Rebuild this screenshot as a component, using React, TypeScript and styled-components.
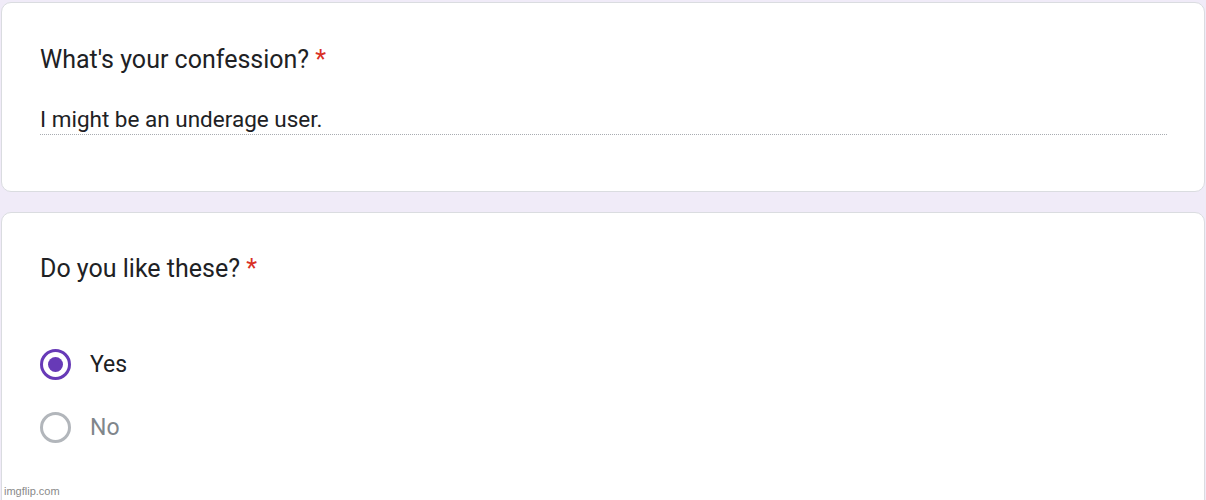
import styled, { createGlobalStyle } from 'styled-components';

const GlobalStyle = createGlobalStyle`
  html, body {
    margin: 0;
    padding: 0;
    background: #f0ebf8;
    font-family: Roboto, 'Liberation Sans', Arial, sans-serif;
    overflow: hidden;
  }
`;

const options = [
  { label: 'Yes', checked: true },
  { label: 'No', checked: false },
];

export default function App() {
  return (
    <>
      <GlobalStyle />
      <Page>
        <Card $pad="42px 38px 56px">
          <Question>
            What's your confession? <Required>*</Required>
          </Question>
          <Answer>I might be an underage user.</Answer>
        </Card>
        <Card $pad="41px 38px 80px">
          <Question>
            Do you like these? <Required>*</Required>
          </Question>
          <OptionList>
            {options.map((opt) => (
              <Option key={opt.label}>
                <Radio $checked={opt.checked} />
                <OptionLabel $checked={opt.checked}>{opt.label}</OptionLabel>
              </Option>
            ))}
          </OptionList>
        </Card>
        <Watermark>imgflip.com</Watermark>
      </Page>
    </>
  );
}

const Page = styled.div`
  position: relative;
  width: 1206px;
  height: 500px;
  padding: 2px 1px 0 1px;
  box-sizing: border-box;
  display: flex;
  flex-direction: column;
  gap: 20px;
  overflow: hidden;
`;

const Card = styled.div<{ $pad: string }>`
  background: #fff;
  border: 1px solid #dadce0;
  border-radius: 10px;
  padding: ${({ $pad }) => $pad};
  display: flex;
  flex-direction: column;
  flex-shrink: 0;
`;

const Question = styled.div`
  color: #202124;
  font-size: 25px;
  line-height: 30px;
`;

const Required = styled.span`
  color: #d93025;
`;

const Answer = styled.div`
  margin-top: 31px;
  width: 1128px;
  color: #202124;
  font-size: 22.5px;
  line-height: 26px;
  padding-bottom: 3px;
  background-image: linear-gradient(to right, #a8acb1 50%, transparent 50%);
  background-size: 2px 1px;
  background-repeat: repeat-x;
  background-position: bottom left;
`;

const OptionList = styled.div`
  margin-top: 65px;
  display: flex;
  flex-direction: column;
  gap: 32px;
`;

const Option = styled.div`
  display: flex;
  align-items: center;
  gap: 19px;
`;

const Radio = styled.span<{ $checked: boolean }>`
  width: 31px;
  height: 31px;
  box-sizing: border-box;
  border-radius: 50%;
  border: 3px solid ${({ $checked }) => ($checked ? '#673ab7' : '#b2b6bb')};
  display: flex;
  align-items: center;
  justify-content: center;

  &::after {
    content: '';
    display: ${({ $checked }) => ($checked ? 'block' : 'none')};
    width: 15px;
    height: 15px;
    border-radius: 50%;
    background: #673ab7;
  }
`;

const OptionLabel = styled.span<{ $checked: boolean }>`
  color: ${({ $checked }) => ($checked ? '#202124' : '#80868b')};
  font-size: 23px;
  line-height: 31px;
`;

const Watermark = styled.div`
  position: absolute;
  left: 4px;
  bottom: 3px;
  font-size: 11px;
  color: #8a8a8a;
  font-family: 'Liberation Sans', Arial, sans-serif;
`;
